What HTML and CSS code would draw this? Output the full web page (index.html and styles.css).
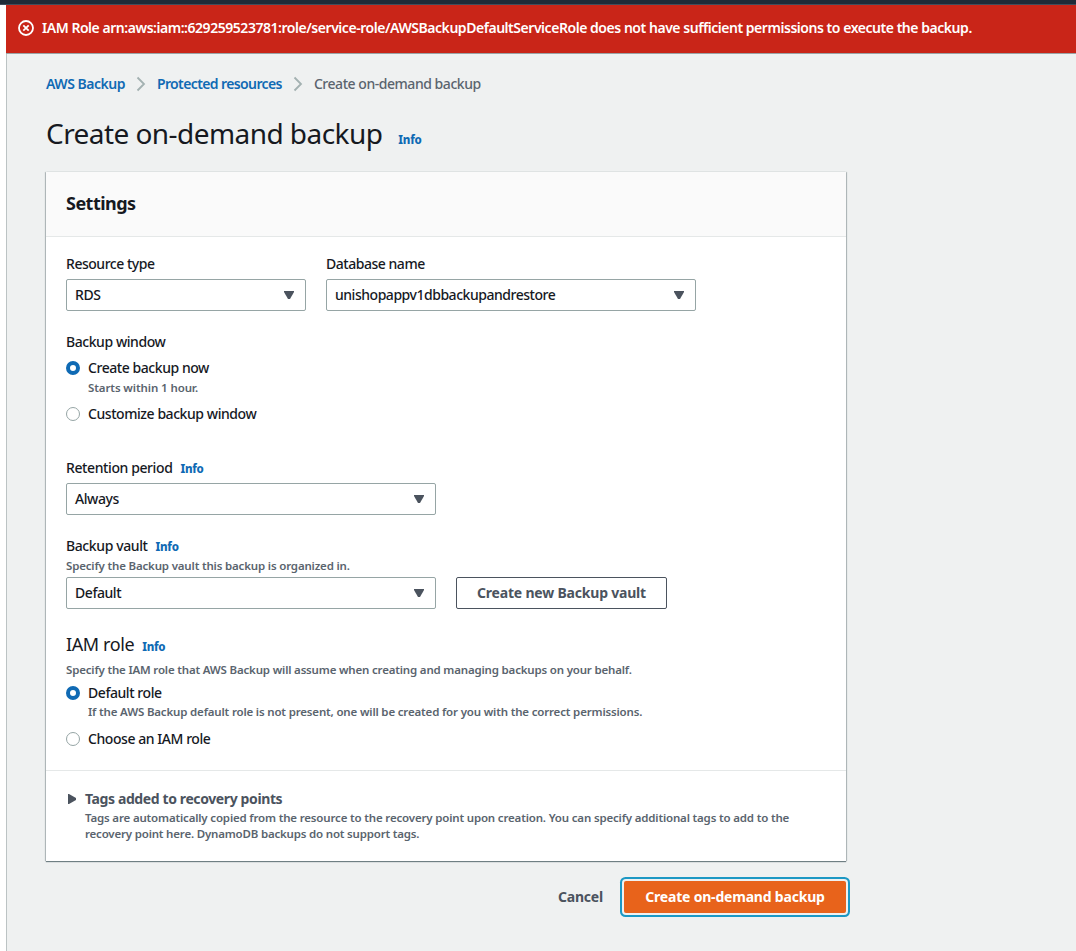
FILE: index.html
```
<!DOCTYPE html>
<html lang="en">
<head>
<meta charset="utf-8">
<title>Create on-demand backup</title>
<link rel="stylesheet" href="styles.css">
</head>
<body>
<div class="topbar"></div>
<div class="shell">
  <div class="alert" role="alert">
    <svg class="alert-icon" viewBox="0 0 16 16"><circle cx="8" cy="8" r="7"/><path d="M5.3 5.3l5.4 5.4M10.7 5.3l-5.4 5.4"/></svg>
    <span class="alert-text">IAM Role arn:aws:iam::629259523781:role/service-role/AWSBackupDefaultServiceRole does not have sufficient permissions to execute the backup.</span>
  </div>
  <main class="content">
    <nav class="crumbs">
      <a class="crumb-root">AWS Backup</a>
      <svg class="chevron" viewBox="0 0 10 16"><path d="M1.500 1.500L8 8l-6.500 6.500"/></svg>
      <a class="crumb-parent">Protected resources</a>
      <svg class="chevron" viewBox="0 0 10 16"><path d="M1.500 1.500L8 8l-6.500 6.500"/></svg>
      <span class="crumb-current">Create on-demand backup</span>
    </nav>
    <div class="title-row"><h1>Create on-demand backup</h1><a class="info">Info</a></div>

    <section class="panel">
      <header class="panel-header"><h2>Settings</h2></header>
      <div class="panel-body">
        <div class="row">
          <div class="field field-type">
            <span class="label">Resource type</span>
            <div class="select"><span>RDS</span><svg class="caret" viewBox="0 0 10 8"><path d="M0 0h10v1L6 8H4L0 1z"/></svg></div>
          </div>
          <div class="field field-wide">
            <span class="label">Database name</span>
            <div class="select"><span class="db-name">unishopappv1dbbackupandrestore</span><svg class="caret" viewBox="0 0 10 8"><path d="M0 0h10v1L6 8H4L0 1z"/></svg></div>
          </div>
        </div>

        <div class="group window-group">
          <div class="label">Backup window</div>
          <div class="radio"><i class="dot on"></i><span>Create backup now</span></div>
          <div class="hint indent hint-start">Starts within 1 hour.</div>
          <div class="radio"><i class="dot"></i><span>Customize backup window</span></div>
        </div>

        <div class="group retention-group field-wide">
          <div class="label-line"><span class="label">Retention period</span><a class="info">Info</a></div>
          <div class="select"><span>Always</span><svg class="caret" viewBox="0 0 10 8"><path d="M0 0h10v1L6 8H4L0 1z"/></svg></div>
        </div>

        <div class="group vault-group">
          <div class="label-line tight"><span class="label">Backup vault</span><a class="info">Info</a></div>
          <div class="hint hint-vault">Specify the Backup vault this backup is organized in.</div>
          <div class="row">
            <div class="select field-wide"><span>Default</span><svg class="caret" viewBox="0 0 10 8"><path d="M0 0h10v1L6 8H4L0 1z"/></svg></div>
            <button class="btn btn-normal">Create new Backup vault</button>
          </div>
        </div>

        <div class="group role-group">
          <div class="label-line role-line"><h3>IAM role</h3><a class="info">Info</a></div>
          <div class="hint hint-role">Specify the IAM role that AWS Backup will assume when creating and managing backups on your behalf.</div>
          <div class="radio"><i class="dot on"></i><span>Default role</span></div>
          <div class="hint indent hint-default">If the AWS Backup default role is not present, one will be created for you with the correct permissions.</div>
          <div class="radio"><i class="dot"></i><span>Choose an IAM role</span></div>
        </div>
      </div>
      <div class="tags">
        <svg class="tri" viewBox="0 0 8 10"><path d="M0 0h1l7 4v2l-7 4H0z"/></svg>
        <div>
          <div class="tags-title">Tags added to recovery points</div>
          <div class="hint">Tags are automatically copied from the resource to the recovery point upon creation. You can specify additional tags to add to the<br><span class="hint-second">recovery point here. DynamoDB backups do not support tags.</span></div>
        </div>
      </div>
    </section>

    <div class="actions">
      <a class="cancel">Cancel</a>
      <button class="btn btn-primary">Create on-demand backup</button>
    </div>
  </main>
</div>
</body>
</html>
```
FILE: styles.css
```
* { box-sizing: border-box; }
body {
  margin: 0;
  background: #fff;
  color: #16191f;
  font: 500 14px/22px "Noto Sans", sans-serif;
  letter-spacing: -0.44px;
  white-space: nowrap;
}
.topbar { height: 5px; background: #1f2b38; border-bottom: 1px solid #414d5c; }
.shell { margin-left: 6px; height: 946px; background: #eff1f1; display: flex; flex-direction: column; }
.alert {
  height: 49px;
  flex: none;
  background: #c92518;
  color: #fff;
  border-bottom: 1px solid #9ba4a6;
  display: flex;
  align-items: center;
  padding: 0 12px 3px;
  gap: 8px;
  font-weight: 600;
  letter-spacing: -0.46px;
}
.alert-icon { width: 16px; height: 16px; flex: none; }
.alert-icon * { fill: none; stroke: #fff; stroke-width: 1.8; }
.content { flex: 1; border-left: 1px solid #bcc3c4; padding: 19px 0 0 39px; }
.crumbs { display: flex; align-items: center; height: 22px; color: #5a646e; letter-spacing: -0.4px; }
.crumbs a { color: #0f6ab4; font-weight: 600; }
.crumb-root { letter-spacing: -0.5px; }
.crumb-parent { letter-spacing: -0.61px; }
.crumb-current { font-weight: 550; letter-spacing: -0.46px; }
.chevron { width: 10px; height: 16px; margin: 0 11px; flex: none; }
.chevron path { fill: none; stroke: #a3b1b1; stroke-width: 1.8; }
.title-row { display: flex; align-items: baseline; height: 36px; margin-top: 20px; gap: 16px; }
h1, h2, h3 { margin: 0; }
h1 { font-size: 28px; line-height: 36px; font-weight: 450; letter-spacing: -0.56px; }
.info { color: #0f6ab4; font-size: 11.5px; font-weight: 800; letter-spacing: -0.25px; line-height: 16px; }
.panel {
  width: 800px;
  height: 689px;
  margin-top: 21px;
  background: #fff;
  box-shadow: 0 1px 1px 0 rgba(0,28,36,.5), 1px 0 1px 0 rgba(0,28,36,.2), -1px 0 1px 0 rgba(0,28,36,.2);
}
.panel-header { height: 65px; padding: 20px; background: #fafafa; border-bottom: 1px solid #e5e8e8; }
h2 { font-size: 18px; line-height: 22px; font-weight: 700; letter-spacing: -0.53px; }
.panel-body { height: 534px; padding: 16px 20px 0; border-bottom: 1px solid #e5e8e8; }
.row { display: flex; gap: 20px; }
.field .label { display: block; margin-bottom: 4px; letter-spacing: -0.47px; }
.field-type { width: 240px; }
.field-wide { width: 370px; }
.db-name { letter-spacing: -0.47px; }
.select {
  height: 32px;
  border: 1px solid #96a5a5;
  border-radius: 2px;
  background: #fff;
  padding: 0 11px 0 8px;
  display: flex;
  align-items: center;
  justify-content: space-between;
}
.caret { width: 10px; height: 8px; fill: #4b535e; }
.group { display: flow-root; }
.window-group { margin-top: 20px; }
.window-group .label { margin-bottom: 4px; }
.radio { display: flex; align-items: center; height: 22px; gap: 8px; }
.dot { width: 14px; height: 14px; border: 1px solid #96a5a5; border-radius: 50%; background: #fff; }
.dot.on { border: 4px solid #0f6ab4; }
.hint { font-size: 11.5px; line-height: 16px; color: #5a646e; font-weight: 600; letter-spacing: -0.17px; }
.hint-second { letter-spacing: -0.19px; }
.indent { padding-left: 22px; }
.hint-start { margin: 1px 0 7px; letter-spacing: -0.1px; }
.retention-group { margin-top: 32px; }
.label-line { display: flex; align-items: baseline; height: 22px; gap: 8px; margin-bottom: 4px; letter-spacing: -0.4px; }
.label-line.tight { margin-bottom: 1px; }
.vault-group { margin-top: 20px; }
.hint-vault { margin-bottom: 3px; }
.btn { height: 32px; border-radius: 2px; font: 700 14px/20px "Noto Sans", sans-serif; letter-spacing: -0.2px; text-align: center; padding: 0; white-space: nowrap; }
.btn-normal { width: 211px; border: 1px solid #4b535e; background: #fff; color: #4b535e; }
.role-group { margin-top: 22px; }
.role-line { height: 26px; margin-bottom: 5px; }
h3 { font-size: 18px; line-height: 26px; font-weight: 450; }
.hint-role { margin-bottom: 4px; letter-spacing: -0.18px; }
.hint-default { margin-bottom: 8px; }
.tags { display: flex; gap: 9px; padding: 17px 20px 0 22px; }
.tri { width: 8px; height: 10px; margin-top: 6px; fill: #4b535e; flex: none; }
.tags-title { font-weight: 700; color: #4b535e; letter-spacing: -0.39px; }
.actions { width: 800px; display: flex; justify-content: flex-end; align-items: center; margin-top: 20px; gap: 21px; }
.cancel { font-weight: 700; color: #4b535e; letter-spacing: -0.2px; }
.btn-primary {
  width: 222px;
  border: 0;
  background: #e8631b;
  color: #fff;
  box-shadow: 0 0 0 2px #eff1f1, 0 0 0 4px #1c98c4;
}
```
